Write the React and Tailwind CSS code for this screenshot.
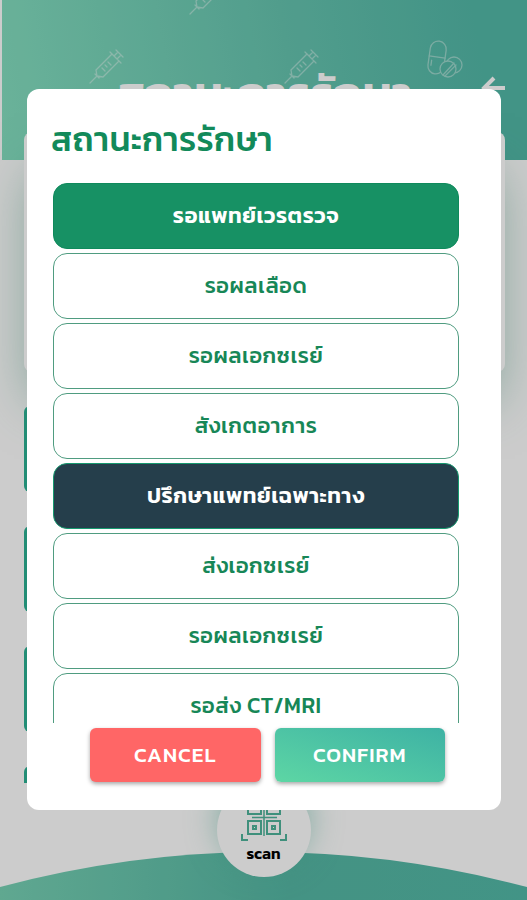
import { useState } from 'react';

const STATUSES = [
  { id: 1, label: 'รอแพทย์เวรตรวจ', tone: 'active' },
  { id: 2, label: 'รอผลเลือด', tone: 'plain' },
  { id: 3, label: 'รอผลเอกซเรย์', tone: 'plain' },
  { id: 4, label: 'สังเกตอาการ', tone: 'plain' },
  { id: 5, label: 'ปรึกษาแพทย์เฉพาะทาง', tone: 'dark' },
  { id: 6, label: 'ส่งเอกซเรย์', tone: 'plain' },
  { id: 7, label: 'รอผลเอกซเรย์', tone: 'plain' },
  { id: 8, label: 'รอส่ง CT/MRI', tone: 'plain' },
];

const TONE = {
  active: 'bg-[#179164] text-white font-semibold border-[#0f8a5c]',
  dark:   'bg-[#253e4b] text-white font-semibold border-[#16996f]',
  plain:  'bg-white text-[#178757] font-medium border-[#4f9c80]',
};

function Syringe({ x, y }) {
  return (
    <g transform={`translate(${x} ${y})`}>
      <path d="M0 34 L7 27 M5 25 L9 29 M7 27 L6 21 L22 5 L29 12 L13 28 L7 27 M20 3 L31 14 M24 7 L28 3 M27 10 L31 6 M26 1 L33 8 M12 19 L15 22 M15 16 L17 18 M18 13 L21 16" />
    </g>
  );
}

function HeaderArt() {
  return (
    <svg
      viewBox="0 0 527 160"
      preserveAspectRatio="xMidYMin slice"
      className="absolute inset-0 w-full h-full opacity-40"
      fill="none"
      stroke="white"
      strokeWidth="1.3"
      strokeLinecap="round"
      aria-hidden="true"
    >
      <Syringe x={89} y={49} />
      <Syringe x={284} y={49} />
      <Syringe x={189} y={-20} />
      <Syringe x={-19} y={-26} />
      <g transform="rotate(8 436 58)">
        <rect x="428" y="41" width="16" height="33" rx="8" />
        <path d="M428 57 H444 M431 61 V66" />
      </g>
      <g>
        <circle cx="453" cy="65" r="8" />
        <circle cx="447" cy="69" r="8" fill="#55b9a7" />
        <path d="M442 75 L453 63 M444 76 L455 65" />
      </g>
    </svg>
  );
}

function QrIcon() {
  return (
    <svg width="46" height="46" viewBox="0 0 46 46" fill="none" stroke="#4fb59b" strokeWidth="2" aria-hidden="true">
      <path d="M1 7 V1 H7 M39 1 H45 V7 M1 39 V45 H7 M39 45 H45 V39" />
      <rect x="7" y="6" width="13" height="13" />
      <rect x="26" y="6" width="13" height="13" />
      <rect x="7" y="26" width="13" height="13" />
      <rect x="26" y="26" width="13" height="13" />
      <rect x="12" y="11" width="3" height="3" />
      <rect x="31" y="11" width="3" height="3" />
      <rect x="12" y="31" width="3" height="3" />
      <rect x="31" y="31" width="3" height="3" />
      <path d="M23 4 V41 M11 22.500 H36" strokeWidth="1.500" />
    </svg>
  );
}

function TreatmentPage() {
  return (
    <div className="relative h-screen flex flex-col bg-white overflow-hidden">
      <header className="relative shrink-0 h-40 ml-0.5 pt-[70px] px-[22px] bg-linear-[80deg] from-[#86e0c1] via-[#66c5b0] via-55% to-[#53b9a8] to-90%">
        <HeaderArt />
        <div className="relative grid grid-cols-[24px_1fr_24px] items-start">
          <span />
          <h1 className="text-center text-[46px] leading-[46px] font-semibold text-white whitespace-nowrap">
            สถานะการรักษา
          </h1>
          <button type="button" aria-label="Back" className="mt-1.5 text-white">
            <svg width="24" height="24" viewBox="0 0 24 24" fill="none" stroke="currentColor" strokeWidth="4" aria-hidden="true">
              <path d="M13 2 L3 12 L13 22 M2 12 H24" />
            </svg>
          </button>
        </div>
      </header>

      {/* Patient card and the list under it */}
      <main className="relative flex-1 min-h-0 -mt-7 px-6">
        <div className="h-60 mr-[-2px] rounded-lg bg-white shadow-[0_34px_50px_-8px_rgba(60,150,120,0.5)]" />
        <div className="mt-[34px] h-[377px] flex flex-col gap-[34px] overflow-hidden">
          {[0, 1, 2, 3].map((n) => (
            <div key={n} className="shrink-0 h-[86px] mr-3 rounded-md bg-[#2bb193]" />
          ))}
        </div>
      </main>

      <footer className="absolute inset-x-0 bottom-0 h-12 flex justify-center">
        <svg viewBox="0 0 527 48" preserveAspectRatio="none" className="absolute inset-0 w-full h-full" aria-hidden="true">
          <defs>
            <linearGradient id="wave" x1="0" x2="1">
              <stop offset="0" stopColor="#78d2b5" />
              <stop offset="0.55" stopColor="#56b8a5" />
              <stop offset="1" stopColor="#53b9a8" />
            </linearGradient>
          </defs>
          <path d="M0 35 Q263 -35 527 35 V48 H0 Z" fill="url(#wave)" />
        </svg>
        <button
          type="button"
          className="relative -mt-[69px] size-[94px] shrink-0 rounded-full bg-white shadow-[0_-10px_30px_rgba(80,180,155,0.5)] flex flex-col items-center justify-end gap-0.5 pb-3.5 text-base leading-5 font-semibold text-black"
        >
          <QrIcon />
          <span>scan</span>
        </button>
      </footer>
    </div>
  );
}

export default function App() {
  const [selected, setSelected] = useState(1);

  return (
    <div className="font-[Kanit,Prompt,'Noto_Sans_Thai','Noto_Sans',sans-serif]">
      <TreatmentPage />

      <div className="fixed inset-0 pl-[27px] pr-[26px] pb-0.5 flex items-center justify-center bg-black/20">
        <section
          role="dialog"
          aria-labelledby="dialog-title"
          className="w-full rounded-xl bg-white pt-6 pb-7 pl-[26px] pr-[42px]"
        >
          <h2 id="dialog-title" className="-ml-0.5 text-[34px] leading-[52px] font-medium text-[#128a5a] tracking-[0.01em] whitespace-nowrap">
            สถานะการรักษา
          </h2>

          <div className="mt-[18px] h-[60vh] flex flex-col gap-1 overflow-hidden">
            {STATUSES.map((s) => (
              <button
                key={s.id}
                type="button"
                aria-pressed={selected === s.id}
                onClick={() => setSelected(s.id)}
                className={`shrink-0 h-[66px] rounded-[14px] border text-[22px] leading-8 tracking-wide ${TONE[s.tone]}`}
              >
                {s.label}
              </button>
            ))}
          </div>

          <div className="mt-[5px] pl-[37px] pr-[14px] grid grid-cols-2 gap-[14px] text-[21px] font-medium tracking-wider text-white">
            <button type="button" className="h-[54px] rounded-md bg-[#ff6666] shadow-[0_2px_4px_rgba(0,0,0,0.35)]">
              CANCEL
            </button>
            <button type="button" className="h-[54px] rounded-md bg-linear-to-tr from-[#5dd6a4] to-[#3eb2a4] shadow-[0_2px_4px_rgba(0,0,0,0.35)]">
              CONFIRM
            </button>
          </div>
        </section>
      </div>
    </div>
  );
}
